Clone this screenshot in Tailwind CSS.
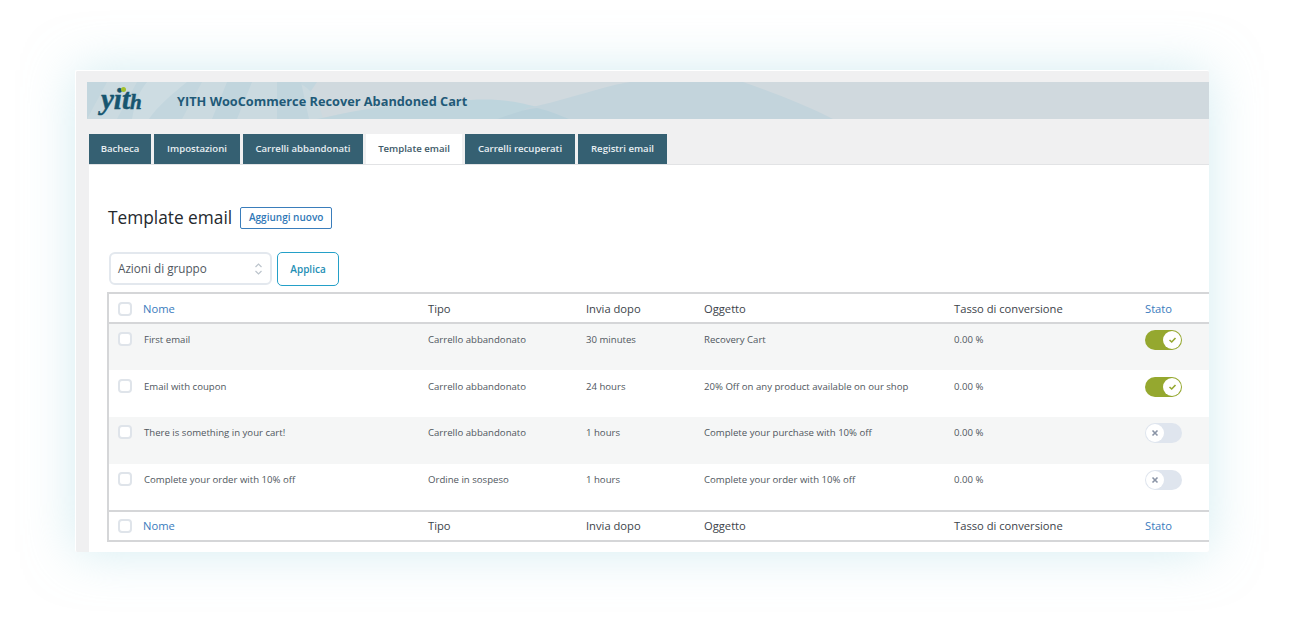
<!DOCTYPE html>
<html lang="en">

<head>
    <meta charset="UTF-8">
    <title>Template email</title>
    <script src="https://cdn.jsdelivr.net/npm/@tailwindcss/browser@4"></script>
</head>

<body class="bg-white h-[635px] overflow-hidden font-['Open_Sans',sans-serif]">

    <div class="pt-[70px] pl-[75px]">
        <div class="w-[1134px] h-[482px] bg-[#f0f0f1] pt-[11px] pl-[11px] overflow-hidden rounded-[2px] border-t border-l border-white shadow-[0_0_50px_rgba(170,220,230,0.5)]">

            <!-- Banner -->
            <div class="relative h-[37px] bg-[#d0d9de] flex items-center overflow-hidden">
                <svg class="absolute inset-0" width="1122" height="37" viewBox="0 0 1122 37">
                    <path d="M0 0H230L205 37H0Z" fill="#c3d6de" />
                    <path d="M20 0H50L30 37H0Z" fill="#cbdae0" />
                    <path d="M60 0H100C85 12 70 25 62 37H45C48 20 52 10 60 0Z" fill="#cddce2" />
                    <path d="M115 0H205C222 0 232 20 236 37H95Z" fill="#cbdae0" />
                    <path d="M140 0H165L150 37H125Z" fill="#c1d5dd" />
                    <path d="M190 0H214L222 37H190Z" fill="#c1d5dd" />
                    <path d="M230 37C290 24 320 20 383 18C430 18 455 26 480 37Z" fill="#c0d5dd" />
                    <path d="M383 37V18C420 16 440 22 460 28L500 37Z" fill="#bed5dd" />
                    <path d="M440 26C480 18 520 3 543 0H656C690 12 720 24 746 37H430C432 32 436 28 440 26Z" fill="#c3d4dc" />
                    <path d="M410 37C425 32 438 27 450 26C460 28 472 33 482 37Z" fill="#b8d0da" />
                </svg>
                <span class="relative ml-[14px] w-[76px] font-['Liberation_Serif',serif] italic font-bold text-[29px] leading-[37px] text-[#17556f] [-webkit-text-stroke:0.5px_#17556f]">yit<span class="text-[21px]">h</span></span>
                <span class="absolute left-[34px] top-[5px] w-[5px] h-[5px] rounded-full bg-[#a3c02c]"></span>
                <span class="relative mt-[2px] text-[12.75px] font-bold text-[#1f5a78]">YITH WooCommerce Recover Abandoned Cart</span>
            </div>

            <!-- Tabs -->
            <div class="flex gap-[3px] pl-[2px] mt-[15px] h-[30px] text-[9.6px] font-semibold">
                <a class="w-[62px] pt-[1px] flex items-center justify-center bg-[#356072] text-[#e8eff2]">Bacheca</a>
                <a class="w-[86px] pt-[1px] flex items-center justify-center bg-[#356072] text-[#e8eff2]">Impostazioni</a>
                <a class="w-[120px] pt-[1px] flex items-center justify-center bg-[#356072] text-[#e8eff2]">Carrelli abbandonati</a>
                <a class="w-[96px] pt-[1px] flex items-center justify-center bg-white text-[#3e5a68]">Template email</a>
                <a class="w-[110px] pt-[1px] flex items-center justify-center bg-[#356072] text-[#e8eff2]">Carrelli recuperati</a>
                <a class="w-[89px] pt-[1px] flex items-center justify-center bg-[#356072] text-[#e8eff2]">Registri email</a>
            </div>

            <!-- Content -->
            <div class="ml-[2px] bg-white border-t border-[#e2e3e5] h-[389px] pl-[19px] overflow-hidden">
                <div class="flex items-center gap-[8px] mt-[41px] h-[23px]">
                    <h1 class="text-[17.3px] text-[#24292e] font-normal leading-[23px]">Template email</h1>
                    <button class="w-[92px] h-[22px] border border-[#3a7dbb] rounded-[2px] text-[#2f78b7] text-[10px] font-semibold">Aggiungi nuovo</button>
                </div>

                <div class="flex gap-[5px] mt-[23px] h-[34px]">
                    <div class="w-[163px] h-[33px] ml-[1px] border-2 border-[#e3e8ee] rounded-[6px] flex items-center justify-between pl-[7px] pr-[7px] text-[#50575e] text-[11.7px]">
                        <span>Azioni di gruppo</span>
                        <svg width="9" height="14" viewBox="0 0 9 14" fill="none" stroke="#bcc4cc" stroke-width="1.2">
                            <path d="M1.5 5L4.5 2L7.5 5M1.5 9L4.5 12L7.5 9" />
                        </svg>
                    </div>
                    <button class="w-[62px] h-[34px] border border-[#24a0c8] rounded-[5px] text-[#1f8fb5] text-[10px] font-semibold">Applica</button>
                </div>

                <!-- Table -->
                <div class="w-[1110px] mt-[6px] -ml-[1px] border-2 border-r-0 border-[#d5d6d8] text-[9.6px] text-[#50575e]">
                    <div class="grid grid-cols-[34px_285px_158px_118px_250px_191px_1fr] h-[30px] pt-[2px] items-center border-b-2 border-[#d5d6d8] text-[11.2px] font-medium text-[#3c434a]">
                        <span class="pl-[9px]"><span class="block w-[14px] h-[14px] bg-white border-2 border-[#dfe4ea] rounded-[4px]"></span></span>
                        <span class="text-[#3a7bbd] font-medium">Nome</span>
                        <span>Tipo</span>
                        <span>Invia dopo</span>
                        <span>Oggetto</span>
                        <span>Tasso di conversione</span>
                        <span class="text-[#3a7bbd]">Stato</span>
                    </div>

                    <div class="grid grid-cols-[34px_285px_158px_118px_250px_191px_1fr] h-[46px] pt-[9px] bg-[#f5f6f6]">
                        <span class="pl-[9px] -mt-[1px]"><span class="block w-[14px] h-[14px] bg-white border-2 border-[#dfe4ea] rounded-[4px]"></span></span>
                        <span class="pl-[1px]">First email</span>
                        <span>Carrello abbandonato</span>
                        <span>30 minutes</span>
                        <span>Recovery Cart</span>
                        <span>0.00 %</span>
                        <span class="block w-[37px] h-[20px] -mt-[3px] rounded-full bg-[#95a82f] relative"><span class="absolute right-[1px] top-[1px] w-[18px] h-[18px] rounded-full bg-white flex items-center justify-center"><svg width="9" height="8" viewBox="0 0 9 8" fill="none" stroke="#95a82f" stroke-width="1.6"><path d="M1.5 4L3.7 6L7.5 2" /></svg></span></span>
                    </div>

                    <div class="grid grid-cols-[34px_285px_158px_118px_250px_191px_1fr] h-[47px] pt-[10px] bg-white">
                        <span class="pl-[9px] -mt-[1px]"><span class="block w-[14px] h-[14px] bg-white border-2 border-[#dfe4ea] rounded-[4px]"></span></span>
                        <span class="pl-[1px]">Email with coupon</span>
                        <span>Carrello abbandonato</span>
                        <span>24 hours</span>
                        <span>20% Off on any product available on our shop</span>
                        <span>0.00 %</span>
                        <span class="block w-[37px] h-[20px] -mt-[3px] rounded-full bg-[#95a82f] relative"><span class="absolute right-[1px] top-[1px] w-[18px] h-[18px] rounded-full bg-white flex items-center justify-center"><svg width="9" height="8" viewBox="0 0 9 8" fill="none" stroke="#95a82f" stroke-width="1.6"><path d="M1.5 4L3.7 6L7.5 2" /></svg></span></span>
                    </div>

                    <div class="grid grid-cols-[34px_285px_158px_118px_250px_191px_1fr] h-[47px] pt-[9px] bg-[#f5f6f6]">
                        <span class="pl-[9px] -mt-[1px]"><span class="block w-[14px] h-[14px] bg-white border-2 border-[#dfe4ea] rounded-[4px]"></span></span>
                        <span class="pl-[1px]">There is something in your cart!</span>
                        <span>Carrello abbandonato</span>
                        <span>1 hours</span>
                        <span>Complete your purchase with 10% off</span>
                        <span>0.00 %</span>
                        <span class="block w-[37px] h-[20px] -mt-[3px] rounded-full bg-[#dfe5ee] relative"><span class="absolute left-[1px] top-[1px] w-[18px] h-[18px] rounded-full bg-white flex items-center justify-center"><svg width="8" height="8" viewBox="0 0 8 8" fill="none" stroke="#8a94a6" stroke-width="1.6"><path d="M1.5 1.5L6.5 6.5M6.5 1.5L1.5 6.5" /></svg></span></span>
                    </div>

                    <div class="grid grid-cols-[34px_285px_158px_118px_250px_191px_1fr] h-[46px] pt-[9px] bg-white">
                        <span class="pl-[9px] -mt-[1px]"><span class="block w-[14px] h-[14px] bg-white border-2 border-[#dfe4ea] rounded-[4px]"></span></span>
                        <span class="pl-[1px]">Complete your order with 10% off</span>
                        <span>Ordine in sospeso</span>
                        <span>1 hours</span>
                        <span>Complete your order with 10% off</span>
                        <span>0.00 %</span>
                        <span class="block w-[37px] h-[20px] -mt-[3px] rounded-full bg-[#dfe5ee] relative"><span class="absolute left-[1px] top-[1px] w-[18px] h-[18px] rounded-full bg-white flex items-center justify-center"><svg width="8" height="8" viewBox="0 0 8 8" fill="none" stroke="#8a94a6" stroke-width="1.6"><path d="M1.5 1.5L6.5 6.5M6.5 1.5L1.5 6.5" /></svg></span></span>
                    </div>

                    <div class="grid grid-cols-[34px_285px_158px_118px_250px_191px_1fr] h-[30px] items-center border-t-2 border-[#d5d6d8] text-[11.2px] font-medium text-[#3c434a]">
                        <span class="pl-[9px]"><span class="block w-[14px] h-[14px] bg-white border-2 border-[#dfe4ea] rounded-[4px]"></span></span>
                        <span class="text-[#3a7bbd] font-medium">Nome</span>
                        <span>Tipo</span>
                        <span>Invia dopo</span>
                        <span>Oggetto</span>
                        <span>Tasso di conversione</span>
                        <span class="text-[#3a7bbd]">Stato</span>
                    </div>
                </div>
            </div>
        </div>
    </div>

</body>

</html>
